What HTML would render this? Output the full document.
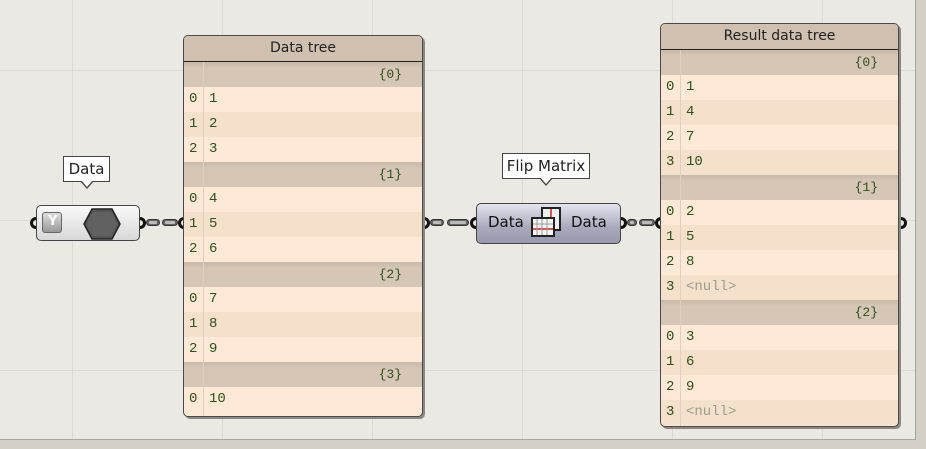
<!DOCTYPE html>
<html><head><meta charset="utf-8"><style>
*{margin:0;padding:0;box-sizing:border-box}
body{width:926px;height:449px;overflow:hidden;position:relative;background:#d4d0c8;font-family:"DejaVu Sans","Liberation Sans",sans-serif}
.canvas{position:absolute;left:0;top:0;width:916px;height:440px;background:#ebe9e3;border-right:1px solid #a8a59e;border-bottom:1px solid #a8a59e;
background-image:linear-gradient(#dcdad3 1px,transparent 1px),linear-gradient(90deg,#dcdad3 1px,transparent 1px);background-size:150px 150px;background-position:72px 70px}
.panel{position:absolute;border:1px solid #4a4a4a;border-radius:5px;overflow:hidden;background:#fee9d6;box-shadow:2px 2px 0 #8a8784}
.title{height:26px;background:#cfc0b0;text-align:center;font-size:14px;line-height:25px;color:#222;border-bottom:1.5px solid #222}
.r{height:25px;position:relative;font-family:"Liberation Mono","DejaVu Sans Mono",monospace;font-size:14px;line-height:25px;color:#2c4f1c}
.r.b{background:linear-gradient(#c9b9a9,#d6c6b6 6px);text-align:right;padding-right:20px;font-size:13px}
.r.e{background:#fee9d6}.r.o{background:#f5e0cb}
.r i{font-style:normal;position:absolute;left:5px;top:0}
.r span{position:absolute;left:25px;top:0}
.r.n span{color:#999f8c}
.vl{position:absolute;top:26px;bottom:0;width:1px;background:#e0cfbf}
.tip{position:absolute;background:#fff;border:1px solid #444;font-size:15px;text-align:center;color:#222}
.comp{position:absolute;border:1px solid #444;border-radius:5px}
.g{position:absolute;width:12px;height:12px;border:3px solid #111;border-radius:50%;background:transparent}
.gl{clip-path:inset(0 6px 0 0)}
.gr{clip-path:inset(0 0 0 6px)}
.w{position:absolute;height:7px;background:#666;border-radius:4px;border:1px solid #333}
.w:after{content:"";position:absolute;left:2px;right:2px;top:1px;height:3px;background:#bbb;border-radius:1px}
</style></head><body>
<div class="canvas"></div>

<div class="tip" style="left:63px;top:156px;width:47px;height:26px;line-height:24px">Data</div>
<div style="position:absolute;left:80px;top:181px;width:0;height:0;border-left:7px solid transparent;border-right:7px solid transparent;border-top:8px solid #444"></div>
<div style="position:absolute;left:81px;top:180px;width:0;height:0;border-left:6px solid transparent;border-right:6px solid transparent;border-top:7px solid #fff"></div>
<div class="comp" style="left:36px;top:205px;width:104px;height:36px;background:linear-gradient(#fafafa,#d8d8d8)"></div>
<div style="position:absolute;left:42px;top:212px;width:20px;height:21px;border:1px solid #666;border-radius:3px;background:linear-gradient(#ddd,#999)"></div>
<div style="position:absolute;left:48px;top:214px;font-size:13px;color:#fff;font-weight:bold">Y</div>
<svg style="position:absolute;left:82px;top:207px" width="40" height="34"><polygon points="10,2 30,2 38,17 30,32 10,32 2,17" fill="#555" stroke="#222" stroke-width="1.5"/><polygon points="11,5 29,5 35,17 29,29 11,29 5,17" fill="#666" opacity=".7"/></svg>
<div class="g gl" style="left:30px;top:217px"></div>
<div class="g gr" style="left:134px;top:217px"></div>
<div class="w" style="left:146px;top:219px;width:14px"></div>
<div class="w" style="left:162px;top:219px;width:16px"></div>
<div class="g gl" style="left:178px;top:217px"></div>

<div class="tip" style="left:502px;top:153px;width:88px;height:26px;line-height:24px">Flip Matrix</div>
<div style="position:absolute;left:539px;top:178px;border-left:7px solid transparent;border-right:7px solid transparent;border-top:8px solid #444"></div>
<div style="position:absolute;left:540px;top:177px;border-left:6px solid transparent;border-right:6px solid transparent;border-top:7px solid #fff"></div>
<div class="comp" style="left:476px;top:203px;width:145px;height:41px;background:linear-gradient(#e4e4ee,#a9a9bb 60%,#9a9aae)"></div>
<div style="position:absolute;left:488px;top:213px;font-size:15px;color:#111">Data</div>
<div style="position:absolute;left:571px;top:213px;font-size:15px;color:#111">Data</div>
<svg style="position:absolute;left:529px;top:207px" width="34" height="34"><rect x="13" y="1" width="18" height="22" fill="#eee" stroke="#222" stroke-width="2"/><line x1="22" y1="2" x2="22" y2="22" stroke="#c22" stroke-width="1.5"/><rect x="3" y="11" width="22" height="18" fill="#f4f4f4" stroke="#222" stroke-width="2"/><line x1="4" y1="22" x2="24" y2="22" stroke="#c22" stroke-width="1.5"/><path d="M8 12v16M13 12v16M18 12v16M4 17h20" stroke="#999" stroke-width="1"/></svg>
<div class="g gr" style="left:418px;top:217px"></div>
<div class="w" style="left:430px;top:219px;width:14px"></div>
<div class="w" style="left:447px;top:219px;width:22px"></div>
<div class="g gl" style="left:470px;top:217px"></div>
<div class="g gr" style="left:615px;top:217px"></div>
<div class="w" style="left:627px;top:219px;width:10px"></div>
<div class="w" style="left:639px;top:219px;width:16px"></div>
<div class="g gl" style="left:655px;top:217px"></div>
<div class="g gr" style="left:895px;top:217px"></div>

<div class="panel" style="left:183px;top:35px;width:240px;height:382px">
<div class="title">Data tree</div>
<div class="r b">{0}</div>
<div class="r e"><i>0</i><span>1</span></div>
<div class="r o"><i>1</i><span>2</span></div>
<div class="r e"><i>2</i><span>3</span></div>
<div class="r b">{1}</div>
<div class="r e"><i>0</i><span>4</span></div>
<div class="r o"><i>1</i><span>5</span></div>
<div class="r e"><i>2</i><span>6</span></div>
<div class="r b">{2}</div>
<div class="r e"><i>0</i><span>7</span></div>
<div class="r o"><i>1</i><span>8</span></div>
<div class="r e"><i>2</i><span>9</span></div>
<div class="r b">{3}</div>
<div class="r e"><i>0</i><span>10</span></div>
<div class="vl" style="left:19px"></div>
</div>

<div class="panel" style="left:660px;top:23px;width:239px;height:404px">
<div class="title">Result data tree</div>
<div class="r b">{0}</div>
<div class="r e"><i>0</i><span>1</span></div>
<div class="r o"><i>1</i><span>4</span></div>
<div class="r e"><i>2</i><span>7</span></div>
<div class="r o"><i>3</i><span>10</span></div>
<div class="r b">{1}</div>
<div class="r e"><i>0</i><span>2</span></div>
<div class="r o"><i>1</i><span>5</span></div>
<div class="r e"><i>2</i><span>8</span></div>
<div class="r o n"><i>3</i><span>&lt;null&gt;</span></div>
<div class="r b">{2}</div>
<div class="r e"><i>0</i><span>3</span></div>
<div class="r o"><i>1</i><span>6</span></div>
<div class="r e"><i>2</i><span>9</span></div>
<div class="r o n"><i>3</i><span>&lt;null&gt;</span></div>
<div class="vl" style="left:19px"></div>
</div>
</body></html>
